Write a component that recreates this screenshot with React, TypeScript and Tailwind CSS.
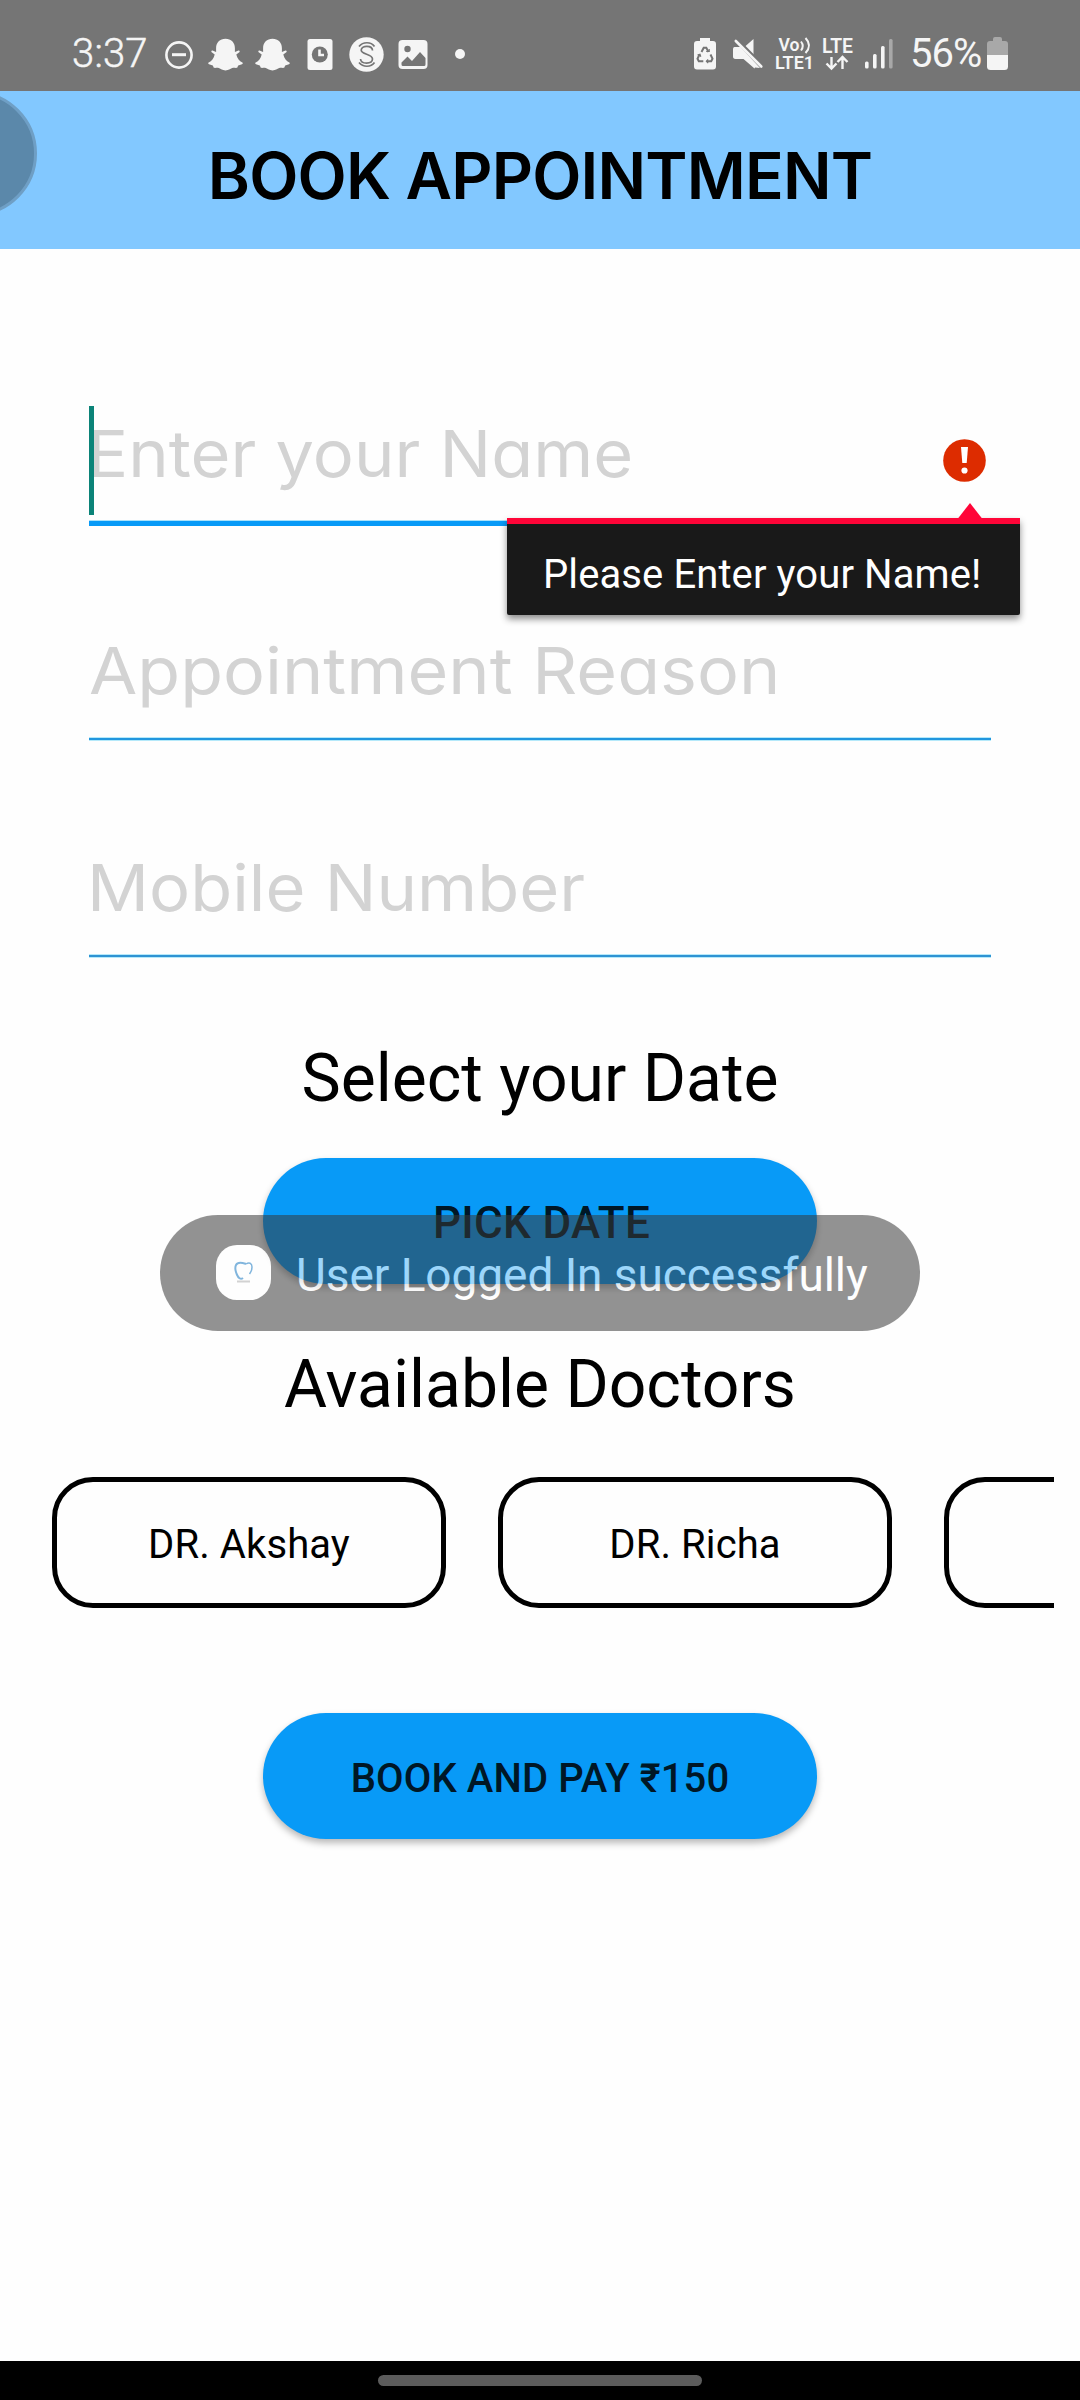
import React from "react";

const FG = "#f5f5f5";
const BG = "#757575";

function Ghost() {
  return (
    <svg width="35" height="33" viewBox="0 0 35 33" fill={FG}>
      <path d="M17.500 .8c5.600 0 9.400 3.800 9.400 9.200v4l3.600-1.600c1 0 1.600 1 .8 1.800l-3 2.400c1 4 3 6.500 6 7.900.8.500.6 1.400-.3 1.800l-3.800 1.300-1 2.200c-1.500.3-3.500-.2-5 .3-2.200.8-3.500 2.300-6.700 2.300s-4.500-1.500-6.700-2.300c-1.500-.5-3.500 0-5-.3l-1-2.200-3.800-1.300c-.9-.4-1.100-1.300-.3-1.800 3-1.400 5-3.900 6-7.900l-3-2.400c-.8-.8-.2-1.800.8-1.800l3.600 1.600v-4c0-5.400 3.800-9.200 9.400-9.200z" />
    </svg>
  );
}

function StatusBar() {
  return (
    <div className="flex h-[91px] shrink-0 items-start bg-[#757575] pt-[34px] pl-[72px] text-[#f5f5f5]">
      <span className="w-[84px] text-[40px] leading-[40px] font-light tracking-[0.2px] [-webkit-text-stroke:0.5px_#f5f5f5]">3:37</span>
      <svg className="ml-[8px] mt-[6px]" width="30" height="30" viewBox="0 0 30 30" fill="none" stroke={FG} strokeWidth="2.600">
        <circle cx="15" cy="15" r="12.600" />
        <path d="M8 14.700h14" strokeWidth="3" />
      </svg>
      <span className="ml-[14px] mt-[4px]"><Ghost /></span>
      <span className="ml-[12px] mt-[4px]"><Ghost /></span>
      <svg className="ml-[17px] mt-[5px]" width="26" height="31" viewBox="0 0 26 31">
        <rect x=".5" width="25" height="31" rx="2.500" fill={FG} />
        <circle cx="12.800" cy="15.500" r="8" fill={BG} />
        <path d="M12.500 10.500v5.500h4.500" fill="none" stroke={FG} strokeWidth="2.600" />
      </svg>
      <svg className="ml-[16px] mt-[3px]" width="35" height="35" viewBox="0 0 35 35" fill="none" stroke={BG} strokeWidth="1.700">
        <circle cx="17.500" cy="17.500" r="17.200" fill={FG} stroke="none" />
        <path d="M10 9.500c4-5 12-5 15.500 0M10 25.500c4 5 12 5 15.500 0" />
        <path d="M23.500 13.500c0-5.500-11-5.500-11.300-.5 0 5 11.300 3.500 11.300 9-.3 5.500-11.500 5.500-12 0" />
      </svg>
      <svg className="ml-[14px] mt-[6px]" width="30" height="30" viewBox="0 0 30 30">
        <rect x=".5" width="29" height="29" rx="4" fill={FG} />
        <circle cx="9.500" cy="9" r="3.200" fill={BG} />
        <path d="M3.500 22.500l6-6 4.500 4.500 8-9 5.500 6v6.500a1.500 1.500 0 0 1-1.500 1.500H5a1.500 1.500 0 0 1-1.500-1.500z" fill={BG} />
      </svg>
      <span className="mt-[15px] ml-[27px] size-[10px] rounded-full bg-[#f5f5f5]" />

      <svg className="ml-[229px] mt-[3px]" width="22" height="33" viewBox="0 0 22 33">
        <path d="M6 1h10v3h3a3 3 0 0 1 3 3v22.500a3 3 0 0 1-3 3H3a3 3 0 0 1-3-3V7a3 3 0 0 1 3-3h3z" fill={FG} />
        <g fill="none" stroke={BG} strokeWidth="2">
          <path d="M7.500 15l2.200-4.200h2.600L14.500 15M16.500 17.500l2 4.200-1.300 2.600h-4.500M9.300 24.300H4.800l-1.300-2.600 2-4.200" />
          <path d="M12.200 14.500h3v-2.500M14.200 22.500l-1.800 1.800 1.800 1.800M3.500 18l2.500-.8.800 2.500" strokeWidth="1.200" />
        </g>
      </svg>
      <svg className="ml-[16px] mt-[4px]" width="32" height="31" viewBox="0 0 32 31">
        <path d="M13 8.500L21.500 1v16zM2.500 9h6L28 30l-5-.5-.5 1L11.500 21H3.500c-1.800 0-2.500-1-2.500-2.500v-7C1 10 1.500 9 2.500 9z" fill={FG} />
        <path d="M5 1.500l26 26" stroke={BG} strokeWidth="3" />
        <path d="M3.800 3l25.500 25.500" stroke={FG} strokeWidth="2.600" strokeLinecap="round" />
      </svg>
      <svg className="-mt-[1px] ml-[11px] overflow-visible" width="40" height="44" viewBox="0 -4 40 44" fill={FG} fontFamily="Roboto, sans-serif" fontWeight="600">
        <text x="3.500" y="14" fontSize="18" textLength="21" lengthAdjust="spacingAndGlyphs">Vo</text>
        <text x="0" y="32" fontSize="18.500" textLength="39" lengthAdjust="spacingAndGlyphs">LTE1</text>
        <path d="M26 4.500q3.500 4.500 0 9M30.500 1q7 7.500 0 15" fill="none" stroke={FG} strokeWidth="2" />
      </svg>
      <svg className="-mt-[1px] ml-[7px] overflow-visible" width="32" height="44" viewBox="0 -4 32 44" fill={FG} fontFamily="Roboto, sans-serif" fontWeight="600">
        <text x="0" y="15.500" fontSize="19.500" textLength="31" lengthAdjust="spacingAndGlyphs">LTE</text>
        <path d="M9.500 20v12M4.500 26.500l5 5 5-5M20.500 32V20M15.500 25l5-5 5 5" fill="none" stroke={FG} strokeWidth="2.400" />
      </svg>
      <svg className="ml-[11px] mt-[4px]" width="28" height="31" viewBox="0 0 28 31" fill={FG}>
        <rect x="0" y="23.500" width="3.600" height="7" rx="1.500" />
        <rect x="8" y="16" width="3.600" height="14.500" rx="1.500" />
        <rect x="16" y="8" width="3.600" height="22.500" rx="1.500" />
        <rect x="24" y="1" width="3.600" height="29.500" rx="1.500" opacity=".4" />
      </svg>
      <span className="ml-[17px] w-[72px] text-[40px] leading-[40px] tracking-[-1px] whitespace-nowrap">56%</span>
      <svg className="ml-[5px] mt-[3px]" width="22" height="34" viewBox="0 0 22 34">
        <path d="M6 2q0-2 2-2h5q2 0 2 2v2h3a3 3 0 0 1 3 3v11H0V7a3 3 0 0 1 3-3h3z" fill={FG} opacity=".4" />
        <path d="M0 18h21v11.500a3.500 3.500 0 0 1-3.500 3.500h-14A3.500 3.500 0 0 1 0 29.500z" fill={FG} />
      </svg>
    </div>
  );
}

const hint = "pt-[91px] font-[Inter] text-[65px] leading-[109px] whitespace-nowrap text-[#d3d3d3] [font-feature-settings:'cv11']";

function Fields() {
  return (
    <div className="mt-[59px] flex w-[902px] flex-col self-center">
      <div className="relative h-[217px]">
        <div className={hint}><span className="-ml-[2px] inline-block origin-left scale-x-[1.055]">Enter your Name</span></div>
        <div className="mt-[12px] h-[6px] border-t border-[#a9e2fb] bg-[#089af7]" />
        <span className="absolute top-[98px] left-0 h-[109px] w-[5px] bg-[#0b8378]" />
        <svg className="absolute top-[131px] left-[854px]" width="43" height="43" viewBox="0 0 43 43">
          <circle cx="21.500" cy="21.500" r="21.300" fill="#dd2c00" />
          <path d="M18 8h7l-1.300 16h-4.400z" fill="#fff" />
          <circle cx="21.500" cy="31.500" r="3.100" fill="#fff" />
        </svg>
        <div className="absolute top-[210px] left-[418px] z-10 h-[97px] w-[513px] rounded-b-[2px] border-t-[6px] border-[#ff0538] bg-[#191919] pl-[36px] text-[40px] leading-[101px] tracking-[0.1px] whitespace-nowrap text-white shadow-[0_4px_7px_rgba(0,0,0,0.45)]">
          <svg className="absolute -top-[21px] left-[449px]" width="28" height="18" viewBox="0 0 28 18">
            <path d="M14 0L28 18H0z" fill="#ff0538" />
          </svg>
          Please Enter your Name!
        </div>
      </div>
      <div className="h-[217px]">
        <div className={hint}><span className="inline-block origin-left scale-x-[1.077]">Appointment Reason</span></div>
        <div className="mt-[12px] h-[4px] border-y border-[#b5e9fa] bg-[#2196de]" />
      </div>
      <div className="h-[217px]">
        <div className={hint}><span className="-ml-[2px] inline-block origin-left scale-x-[1.056]">Mobile Number</span></div>
        <div className="mt-[12px] h-[4px] border-y border-[#b5e9fa] bg-[#2f93d3]" />
      </div>
    </div>
  );
}

const pill =
  "flex h-[126px] w-[554px] items-center justify-center self-center rounded-full bg-[#089af7] font-medium text-[#001726] shadow-[0_4px_7px_rgba(0,0,0,0.28)]";

function Toast() {
  return (
    <div className="absolute top-[1215px] left-[160px] flex h-[116px] w-[760px] items-center rounded-full bg-[#383838]/90 pl-[56px] opacity-60">
      <span className="-mt-[1px] flex size-[55px] items-center justify-center rounded-[21px] bg-white">
        <svg width="22" height="24" viewBox="0 0 22 24" fill="none">
          <path d="M10 17C5 21 1 8 3 4c2-4 7-2 10-1" stroke="#2f86c8" strokeWidth="2" />
          <path d="M13 3c3-2 6-1 6 3 0 3-1 5-2.500 7" stroke="#2f86c8" strokeWidth="1.500" />
          <path d="M4 20.500h13" stroke="#b5b5b5" strokeWidth="2" />
        </svg>
      </span>
      <span className="ml-[25px] pt-[4px] text-[46px] leading-[54px] tracking-[-0.060px] whitespace-nowrap text-white">User Logged In successfully</span>
    </div>
  );
}

export default function App() {
  return (
    <div className="relative flex h-[2400px] w-[1080px] flex-col overflow-hidden bg-[#fefefe] font-[Roboto,sans-serif] text-black">
      <StatusBar />
      <header className="h-[158px] shrink-0 bg-[#82c8ff] pt-[11px] text-center font-[Inter] text-[64px] leading-[147px] font-semibold tracking-[-0.800px]">
        BOOK APPOINTMENT
      </header>
      <span className="absolute top-[91px] -left-[88px] size-[125px] rounded-full border-[3px] border-[#6f9fc5] bg-[#5b88aa]" />
      <Fields />
      <h2 className="mt-[81px] text-center text-[66px] leading-[78px]">Select your Date</h2>
      <button className={pill + " mt-[40px] pt-[4px] pl-[3px] text-[44px] tracking-[0.300px]"}>PICK DATE</button>
      <h2 className="mt-[62px] text-center text-[66px] leading-[78px]">Available Doctors</h2>
      <div className="mt-[53px] mr-[26px] ml-[52px] flex h-[131px] gap-[52px] overflow-hidden text-[40px] tracking-[0.100px]">
        <div className="flex w-[394px] shrink-0 items-center justify-center rounded-[41px] border-[5px] border-black pt-[4px]">DR. Akshay</div>
        <div className="flex w-[394px] shrink-0 items-center justify-center rounded-[41px] border-[5px] border-black pt-[4px]">DR. Richa</div>
        <div className="w-[394px] shrink-0 rounded-[41px] border-[5px] border-black" />
      </div>
      <button className={pill + " mt-[105px] pt-[6px] text-[40px] tracking-[0.100px]"}>BOOK AND PAY ₹150</button>
      <Toast />
      <footer className="mt-auto flex h-[39px] justify-center bg-black pt-[14px]">
        <span className="h-[11px] w-[324px] rounded-full bg-[#5c5c5c]" />
      </footer>
    </div>
  );
}
